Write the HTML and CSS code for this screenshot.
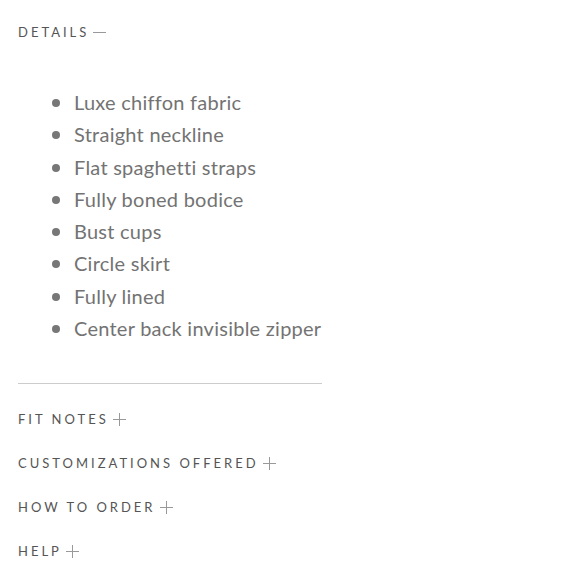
FILE: index.html
```html
<!DOCTYPE html>
<html>
<head>
<meta charset="utf-8">
<link rel="stylesheet" href="styles.css">
</head>
<body>
<div class="panel">
  <section class="section open">
    <h2 class="heading">DETAILS <span class="toggle minus"></span></h2>
    <ul class="details">
      <li>Luxe chiffon fabric</li>
      <li>Straight neckline</li>
      <li>Flat spaghetti straps</li>
      <li>Fully boned bodice</li>
      <li>Bust cups</li>
      <li>Circle skirt</li>
      <li>Fully lined</li>
      <li>Center back invisible zipper</li>
    </ul>
  </section>
  <h2 class="heading">FIT NOTES <span class="toggle plus"></span></h2>
  <h2 class="heading">CUSTOMIZATIONS OFFERED <span class="toggle plus"></span></h2>
  <h2 class="heading">HOW TO ORDER <span class="toggle plus"></span></h2>
  <h2 class="heading">HELP <span class="toggle plus"></span></h2>
</div>
</body>
</html>
```
FILE: styles.css
```css
* { box-sizing: border-box; }
html, body { margin: 0; padding: 0; background: #fff; }
.panel {
  padding: 19px 0 0 18px;
  width: 322px;
  display: flex;
  flex-direction: column;
}
.heading {
  margin: 0;
  font-family: "Lato", "Liberation Sans", sans-serif;
  font-weight: 400;
  font-size: 13px;
  letter-spacing: 3px;
  color: #555;
  height: 26px;
  line-height: 26px;
  display: flex;
  align-items: center;
}
.section.open {
  border-bottom: 1px solid #ccc;
  margin-bottom: 22px;
}
.heading + .heading { margin-top: 18px; }
.toggle {
  position: relative;
  display: inline-block;
  width: 13px;
  height: 13px;
  margin-left: 4px;
}
.toggle::before, .toggle::after {
  content: "";
  position: absolute;
  background: #999;
}
.toggle::before { left: 0; right: 0; top: 6px; height: 1px; }
.plus::after { top: 0; bottom: 0; left: 6px; width: 1px; }
.details {
  margin: 0;
  padding: 41px 0 39px 56px;
  list-style: none;
  font-family: "Lato", "Open Sans", sans-serif;
  font-size: 20px;
  letter-spacing: 0.25px;
  color: #737373;
}
.details li {
  position: relative;
  line-height: 32.3px;
}
.details li::before {
  content: "";
  position: absolute;
  left: -22px;
  top: 13px;
  width: 8px;
  height: 8px;
  border-radius: 50%;
  background: #777;
}
```
